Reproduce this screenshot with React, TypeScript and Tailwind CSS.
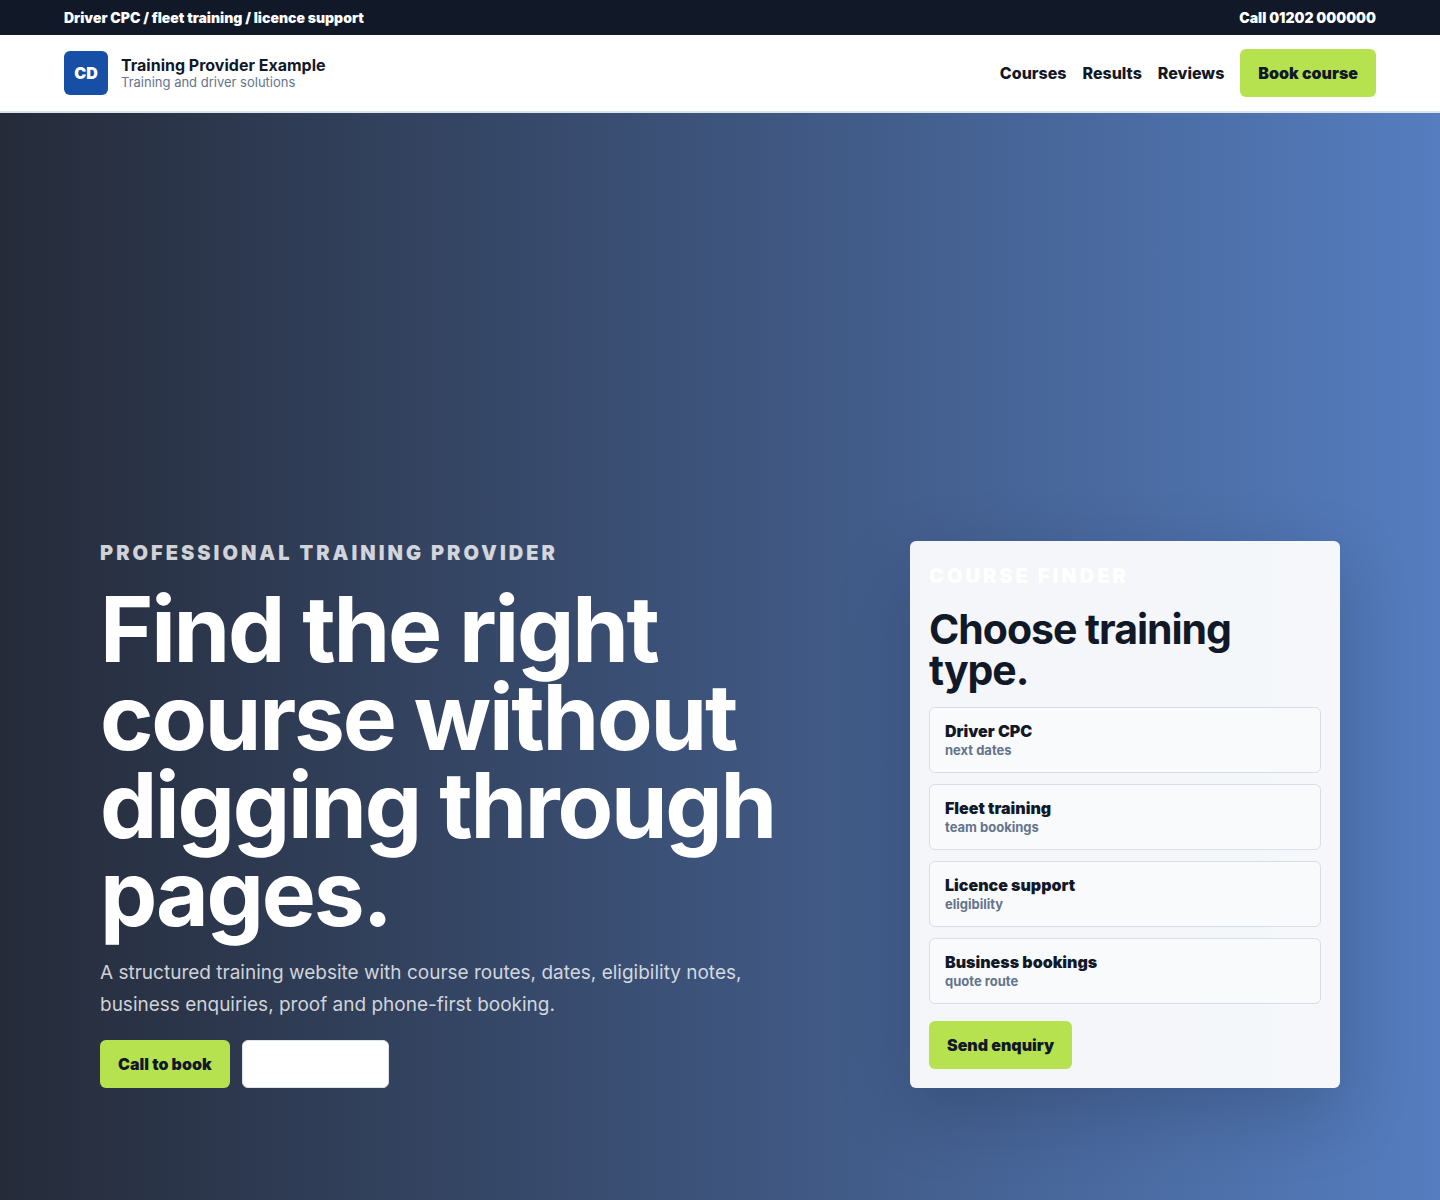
const navLinks = [
  { href: "#courses", label: "Courses" },
  { href: "#results", label: "Results" },
  { href: "#reviews", label: "Reviews" },
];

const courseTypes = [
  { title: "Driver CPC", note: "next dates" },
  { title: "Fleet training", note: "team bookings" },
  { title: "Licence support", note: "eligibility" },
  { title: "Business bookings", note: "quote route" },
];

function TopBar() {
  return (
    <div className="flex items-center justify-between bg-[#111827] px-16 py-2 text-sm leading-[19px] font-black text-white">
      <span>Driver CPC / fleet training / licence support</span>
      <a href="tel:01202000000">Call 01202 000000</a>
    </div>
  );
}

function Header() {
  return (
    <header className="flex items-center justify-between border-b-2 border-[#dbe3ec] bg-white px-16 py-3.5">
      <a href="#top" className="flex items-center gap-[13px]">
        <span className="flex size-11 items-center justify-center rounded-md bg-[#174ea6] font-black text-white">
          CD
        </span>
        <span className="flex flex-col">
          <strong className="text-base leading-[18px] font-bold">Training Provider Example</strong>
          <small className="text-[13px] leading-4 text-[#64748b]">Training and driver solutions</small>
        </span>
      </a>

      <nav className="flex items-center gap-4 font-extrabold">
        {navLinks.map((link) => (
          <a key={link.href} href={link.href}>
            {link.label}
          </a>
        ))}
        <a
          href="#book"
          className="flex h-12 items-center rounded-md bg-[#b7e24f] px-[18px] font-black"
        >
          Book course
        </a>
      </nav>
    </header>
  );
}

function CourseFinder() {
  return (
    <aside className="rounded-md bg-white/94 p-[19px] text-[#111827] shadow-[0_24px_70px_rgba(15,23,42,0.22)]">
      <p className="text-xl leading-8 font-black tracking-[3px] text-white uppercase">
        Course finder
      </p>
      <h2 className="mt-[17px] text-[41px] leading-[41px] font-bold tracking-tight">
        Choose training type.
      </h2>
      <div className="mt-4 grid gap-[11px]">
        {courseTypes.map((course) => (
          <button
            key={course.title}
            type="button"
            className="flex h-[66px] flex-col justify-center rounded-md border border-[#d8dee8] bg-[#f9fafc] px-[15px] text-left"
          >
            <span className="text-base leading-5 font-black">{course.title}</span>
            <small className="text-[13px] leading-[18px] font-bold text-[#64748b]">
              {course.note}
            </small>
          </button>
        ))}
      </div>
      <button
        type="button"
        className="mt-[17px] h-12 rounded-md bg-[#b7e24f] px-[18px] font-black"
      >
        Send enquiry
      </button>
    </aside>
  );
}

function Hero() {
  return (
    <section className="grid min-h-[calc(100vh-113px)] grid-cols-[minmax(0,1fr)_430px] items-end gap-[72px] bg-linear-to-r/srgb from-[#252b39] to-[#557dbf] px-[100px] pt-20 pb-28">
      <div className="text-white">
        <p className="text-xl leading-[26px] font-black tracking-[3px] text-white/78 uppercase">
          Professional training provider
        </p>
        <h1 className="mt-[19px] text-[91px] leading-[88px] font-bold tracking-tight">
          Find the right course without digging through pages.
        </h1>
        <p className="mt-5 max-w-[680px] text-[19px] leading-8 text-white/78">
          A structured training website with course routes, dates, eligibility notes, business
          enquiries, proof and phone-first booking.
        </p>
        <div className="mt-[19px] flex gap-3">
          <a
            href="tel:01202000000"
            className="flex h-12 items-center rounded-md bg-[#b7e24f] px-[18px] font-black text-[#111827]"
          >
            Call to book
          </a>
          <a
            href="#courses"
            className="flex h-12 items-center rounded-md border border-[#dbe3ec] bg-white px-[18px] font-black text-white"
          >
            View courses
          </a>
        </div>
      </div>
      <CourseFinder />
    </section>
  );
}

export default function App() {
  return (
    <div
      id="top"
      className="min-h-screen bg-white font-['Inter',sans-serif] text-base text-[#111827]"
    >
      <TopBar />
      <Header />
      <Hero />
    </div>
  );
}
